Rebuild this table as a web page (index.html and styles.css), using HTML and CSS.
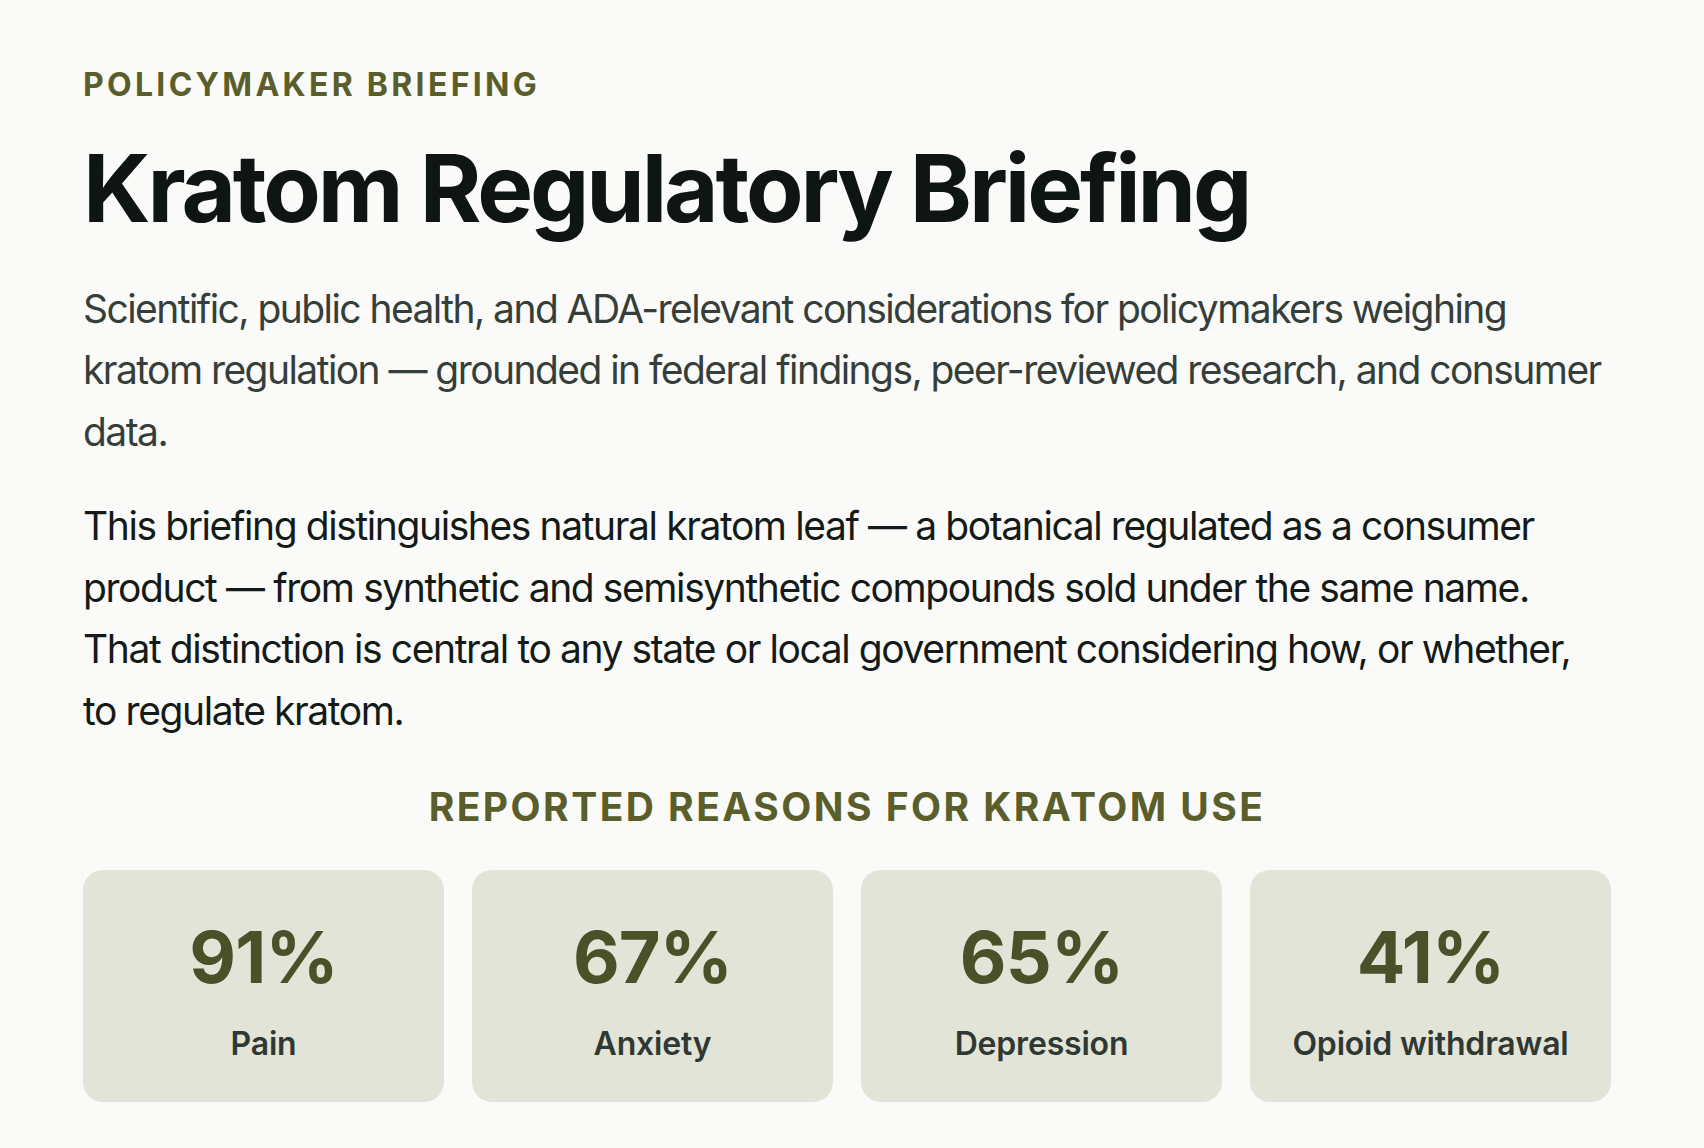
FILE: index.html
```html
<!DOCTYPE html>
<html lang="en">
<head>
<meta charset="utf-8">
<title>Kratom Regulatory Briefing</title>
<link rel="stylesheet" href="styles.css">
</head>
<body>
<main class="page">
  <p class="eyebrow">Policymaker Briefing</p>
  <h1 class="title">Kratom Regulatory Briefing</h1>
  <p class="lead">Scientific, public health, and ADA-relevant considerations for policymakers weighing kratom regulation — grounded in federal findings, peer-reviewed research, and consumer data.</p>
  <p class="body-text">This briefing distinguishes natural kratom leaf — a botanical regulated as a consumer product — from synthetic and semisynthetic compounds sold under the same name. That distinction is central to any state or local government considering how, or whether, to regulate kratom.</p>
  <section class="reasons">
    <h2 class="section-title">Reported Reasons for Kratom Use</h2>
    <div class="stats">
      <div class="stat"><div class="stat-value">91%</div><div class="stat-label">Pain</div></div>
      <div class="stat"><div class="stat-value">67%</div><div class="stat-label">Anxiety</div></div>
      <div class="stat"><div class="stat-value">65%</div><div class="stat-label">Depression</div></div>
      <div class="stat"><div class="stat-value">41%</div><div class="stat-label">Opioid withdrawal</div></div>
    </div>
  </section>
</main>
</body>
</html>
```

FILE: styles.css
```css
* { box-sizing: border-box; }

html, body {
  margin: 0;
  padding: 0;
  background: #fafaf8;
}

body {
  font-family: Inter, "Noto Sans", "DejaVu Sans", sans-serif;
  color: #141a17;
}

.page {
  width: 1528px;
  margin-left: 83px;
  padding-top: 66px;
  padding-bottom: 46px;
}

.eyebrow {
  margin: 0;
  font-size: 32px;
  line-height: 1.2;
  font-weight: 700;
  letter-spacing: 0.103em;
  text-transform: uppercase;
  color: #5a5e2b;
}

.title {
  margin: 33px 0 0;
  font-size: 94px;
  line-height: 1.1;
  font-weight: 700;
  letter-spacing: -0.033em;
  color: #0f1512;
}

.lead {
  margin: 37px 0 0;
  font-size: 39px;
  line-height: 61.7px;
  letter-spacing: -0.04em;
  color: #363e3a;
}

.body-text {
  margin: 32px 0 0;
  font-size: 39px;
  line-height: 61.7px;
  letter-spacing: -0.036em;
  color: #141a17;
}

.reasons {
  margin-top: 42px;
}

.section-title {
  margin: 0;
  text-align: center;
  font-size: 39px;
  line-height: 1.2;
  font-weight: 700;
  letter-spacing: 0.063em;
  text-transform: uppercase;
  color: #5a5e2b;
}

.stats {
  margin-top: 39px;
  display: grid;
  grid-template-columns: repeat(4, 1fr);
  gap: 28px;
}

.stat {
  background: #e3e4d8;
  border-radius: 20px;
  padding: 44px 16px 34px;
  text-align: center;
}

.stat-value {
  font-size: 72px;
  line-height: 1.2;
  font-weight: 700;
  letter-spacing: -0.012em;
  color: #4b5029;
}

.stat-label {
  margin-top: 20px;
  font-size: 32px;
  line-height: 1.5;
  font-weight: 600;
  letter-spacing: -0.006em;
  color: #2f3833;
}
```
